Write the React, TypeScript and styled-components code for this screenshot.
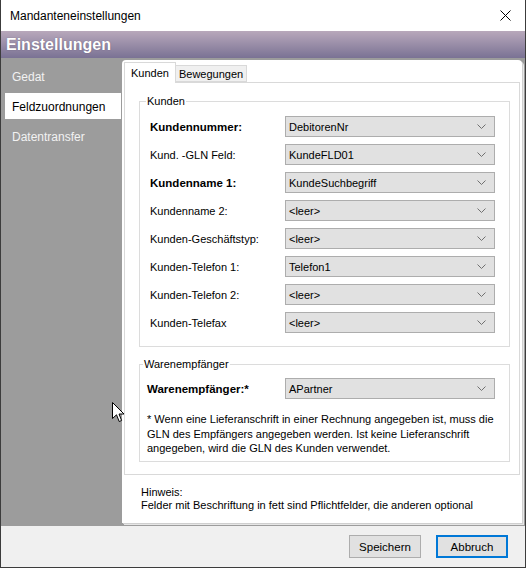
import React from "react";
import styled, { createGlobalStyle } from "styled-components";

const GlobalStyle = createGlobalStyle`
  html, body {
    margin: 0;
    padding: 0;
    background: #ffffff;
  }
  body {
    font-family: "Liberation Sans", Arial, sans-serif;
    font-size: 11px;
    color: #000000;
  }
  * {
    box-sizing: border-box;
  }
`;

type Field = { label: string; value: string; required?: boolean };

const kundenFelder: Field[] = [
  { label: "Kundennummer:", value: "DebitorenNr", required: true },
  { label: "Kund. -GLN Feld:", value: "KundeFLD01" },
  { label: "Kundenname 1:", value: "KundeSuchbegriff", required: true },
  { label: "Kundenname 2:", value: "<leer>" },
  { label: "Kunden-Geschäftstyp:", value: "<leer>" },
  { label: "Kunden-Telefon 1:", value: "Telefon1" },
  { label: "Kunden-Telefon 2:", value: "<leer>" },
  { label: "Kunden-Telefax", value: "<leer>" },
];

const navItems = ["Gedat", "Feldzuordnungen", "Datentransfer"];

function Chevron() {
  return (
    <svg width="9" height="5" viewBox="0 0 9 5">
      <polyline points="0.5,0.5 4.5,4.5 8.5,0.5" fill="none" stroke="#707070" strokeWidth="1" />
    </svg>
  );
}

function ComboBox({ value }: { value: string }) {
  return (
    <StCombo>
      <span>{value}</span>
      <Chevron />
    </StCombo>
  );
}

function MouseCursor() {
  return (
    <StCursor width="13" height="21" viewBox="0 0 13 21">
      <path
        d="M0.5 0.5 L0.5 16.5 L4.5 12.8 L7.2 19.5 L9.6 18.5 L7 12 L12 12 Z"
        fill="#ffffff"
        stroke="#000000"
        strokeWidth="1"
      />
    </StCursor>
  );
}

export default function App() {
  return (
    <>
      <GlobalStyle />
      <StWindow>
        <StTitleBar>
          <StTitle>Mandanteneinstellungen</StTitle>
          <StClose width="11" height="11" viewBox="0 0 11 11">
            <path d="M0.5 0.5 L10.5 10.5 M10.5 0.5 L0.5 10.5" stroke="#000" strokeWidth="1" />
          </StClose>
        </StTitleBar>

        <StHeader>Einstellungen</StHeader>

        <StBody>
          <StNav>
            {navItems.map((item) => (
              <StNavItem key={item} $active={item === "Feldzuordnungen"}>
                {item}
              </StNavItem>
            ))}
          </StNav>

          <StPanel>
            <StTabStrip>
              <StTab $active>Kunden</StTab>
              <StTab>Bewegungen</StTab>
            </StTabStrip>

            <StTabPage>
              <StGroup $padLeft={10} $padTop={7} $padBottom={13}>
                <StLegend>Kunden</StLegend>
                <StRows>
                  {kundenFelder.map((f) => (
                    <StRow key={f.label}>
                      <StLabel $bold={f.required}>{f.label}</StLabel>
                      <ComboBox value={f.value} />
                    </StRow>
                  ))}
                </StRows>
              </StGroup>

              <StGroup $padLeft={7} $padTop={6} $padBottom={5}>
                <StLegend>Warenempfänger</StLegend>
                <StRow>
                  <StLabel $bold>Warenempfänger:*</StLabel>
                  <ComboBox value="APartner" />
                </StRow>
                <StNote>
                  * Wenn eine Lieferanschrift in einer Rechnung angegeben ist, muss die
                  <br />
                  GLN des Empfängers angegeben werden. Ist keine Lieferanschrift
                  <br />
                  angegeben, wird die GLN des Kunden verwendet.
                </StNote>
              </StGroup>
            </StTabPage>

            <StHint>
              Hinweis:
              <br />
              Felder mit Beschriftung in fett sind Pflichtfelder, die anderen optional
            </StHint>
          </StPanel>
        </StBody>

        <StFooter>
          <StButton>Speichern</StButton>
          <StButton $default>Abbruch</StButton>
        </StFooter>

        <MouseCursor />
      </StWindow>
    </>
  );
}

const StWindow = styled.div`
  position: relative;
  display: flex;
  flex-direction: column;
  width: 526px;
  height: 568px;
  border: 1px solid #3c3c3c;
  border-top: none;
  background: #ffffff;
  overflow: hidden;
`;

const StTitleBar = styled.div`
  display: flex;
  align-items: center;
  justify-content: space-between;
  height: 31px;
  padding: 0 14px 0 9px;
  background: #ffffff;
`;

const StTitle = styled.span`
  font-size: 12px;
  color: #000000;
`;

const StClose = styled.svg`
  display: block;
`;

const StHeader = styled.div`
  height: 27px;
  padding: 2px 0 0 5px;
  background: linear-gradient(#b8a8bb, #7a7294);
  color: #ffffff;
  font-size: 16px;
  font-weight: bold;
  line-height: 24px;
  text-shadow: 0 0 1px rgba(60, 50, 80, 0.6);
`;

const StBody = styled.div`
  flex: 1;
  display: flex;
  min-height: 0;
  background: #9c9c9c;
`;

const StNav = styled.nav`
  flex-shrink: 0;
  display: flex;
  flex-direction: column;
  gap: 4px;
  width: 120px;
  padding: 5px 0 0 4px;
`;

const StNavItem = styled.div<{ $active?: boolean }>`
  height: 26px;
  padding-left: 7px;
  line-height: 28px;
  font-size: 12px;
  color: ${(p) => (p.$active ? "#000000" : "#f2f2f2")};
  background: ${(p) => (p.$active ? "#ffffff" : "transparent")};
`;

const StPanel = styled.div`
  flex: 1;
  min-width: 0;
  display: flex;
  flex-direction: column;
  margin: 2px 3px 3px 1px;
  padding: 2px 2px 0 2px;
  background: #ffffff;
  border-radius: 4px 4px 0 0;
  box-shadow: 1px 1px 0 #cfcfcf, 2px 2px 0 #e6e6e6;
`;

const StTabStrip = styled.div`
  display: flex;
  align-items: flex-end;
  height: 20px;
  position: relative;
  z-index: 1;
`;

const StTab = styled.div<{ $active?: boolean }>`
  height: ${(p) => (p.$active ? "21px" : "17px")};
  padding: ${(p) => (p.$active ? "1px 6px 0 6px" : "0 3px 0 3px")};
  line-height: ${(p) => (p.$active ? "18px" : "16px")};
  border: 1px solid #d9d9d9;
  border-bottom: ${(p) => (p.$active ? "none" : "1px solid #d9d9d9")};
  background: ${(p) => (p.$active ? "#ffffff" : "#f0f0f0")};
  margin-bottom: ${(p) => (p.$active ? "-1px" : "0")};
  & + & {
    border-left: none;
  }
`;

const StTabPage = styled.div`
  display: flex;
  flex-direction: column;
  gap: 9px;
  height: 393px;
  padding: 10px 9px 0 14px;
  border: 1px solid #d9d9d9;
`;

const StGroup = styled.fieldset<{ $padLeft: number; $padTop: number; $padBottom: number }>`
  margin: 0;
  min-width: 0;
  padding: ${(p) => `${p.$padTop}px 14px ${p.$padBottom}px ${p.$padLeft}px`};
  border: 1px solid #dcdcdc;
`;

const StLegend = styled.legend`
  margin-left: -4px;
  padding: 0 1px;
  line-height: 16px;
  color: #000000;
`;

const StRows = styled.div`
  display: flex;
  flex-direction: column;
  gap: 7px;
`;

const StRow = styled.div`
  display: grid;
  grid-template-columns: 1fr 210px;
  align-items: center;
`;

const StLabel = styled.span<{ $bold?: boolean }>`
  font-weight: ${(p) => (p.$bold ? "bold" : "normal")};
  font-size: ${(p) => (p.$bold ? "11.5px" : "11px")};
  white-space: nowrap;
`;

const StCombo = styled.div`
  display: flex;
  align-items: center;
  justify-content: space-between;
  height: 21px;
  padding: 0 8px 0 3px;
  background: #e1e1e1;
  border: 1px solid #adadad;
  white-space: nowrap;
`;

const StNote = styled.p`
  margin: 13px 0 0 0;
  line-height: 14.5px;
  white-space: nowrap;
`;

const StHint = styled.div`
  padding: 11px 0 0 17px;
  line-height: 12.5px;
  white-space: nowrap;
`;

const StFooter = styled.div`
  display: flex;
  justify-content: flex-end;
  gap: 15px;
  height: 41px;
  padding: 9px 17px 0 0;
  background: #f0f0f0;
`;

const StButton = styled.button<{ $default?: boolean }>`
  width: 72px;
  height: 23px;
  padding: 0;
  font-family: inherit;
  font-size: 11.5px;
  color: #000000;
  background: #e1e1e1;
  border: ${(p) => (p.$default ? "2px solid #0078d7" : "1px solid #adadad")};
`;

const StCursor = styled.svg`
  position: absolute;
  left: 111px;
  top: 402px;
`;
